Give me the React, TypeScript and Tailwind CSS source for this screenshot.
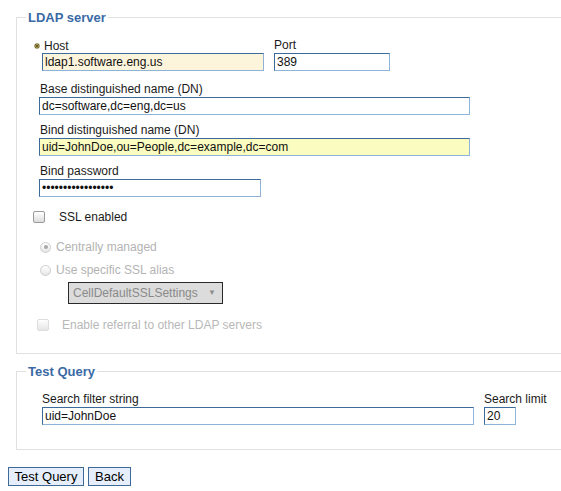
import React from "react";

const inputBase =
    "block h-[18px] border border-t-[#3c6a9a] border-l-[#3c6a9a] border-r-[#8fb3d8] border-b-[#8fb3d8] px-[2px] text-[12px] leading-[16px] text-[#111] outline-none";

function Label({children, className = ""}: {children: React.ReactNode; className?: string}) {
    return <div className={`h-[15px] leading-[14px] text-[12px] text-[#1a1a1a] ${className}`}>{children}</div>;
}

function Checkbox({disabled}: {disabled?: boolean}) {
    return (
        <span
            className={`block w-[12px] h-[12px] rounded-[2px] border bg-gradient-to-b from-white to-[#dcdcdc] ${
                disabled ? "border-[#cfcfcf] opacity-70" : "border-[#9a9a9a]"
            }`}
        />
    );
}

function Radio({checked}: {checked?: boolean}) {
    return (
        <span className="flex items-center justify-center w-[11px] h-[11px] rounded-full border border-[#cdcdcd] bg-gradient-to-b from-white to-[#e6e6e6]">
            {checked && <span className="block w-[4px] h-[4px] rounded-full bg-[#a8a8a8]"/>}
        </span>
    );
}

function RequiredStar() {
    return (
        <svg width="6" height="6" viewBox="0 0 6 6" className="shrink-0">
            <g stroke="#6e5e14" strokeWidth="1.1">
                <line x1="3" y1="0" x2="3" y2="6"/>
                <line x1="0" y1="3" x2="6" y2="3"/>
                <line x1="0.9" y1="0.9" x2="5.1" y2="5.1"/>
                <line x1="5.1" y1="0.9" x2="0.9" y2="5.1"/>
            </g>
        </svg>
    );
}

export default function App() {
    return (
        <div className="w-[561px] h-[491px] overflow-hidden bg-white font-['Liberation_Sans',Arial,sans-serif] text-[12px] text-[#1a1a1a]">
            {/* LDAP server */}
            <fieldset className="mt-[10px] ml-[16px] mr-[-30px] border border-[#e0e0e0] pb-[21px]">
                <legend className="ml-[9px] px-[2px] text-[13px] leading-[15px] font-bold text-[#3a6aa5]">
                    LDAP server
                </legend>

                <div className="pt-[13px] flex gap-[10px] ml-[25px]">
                    <div>
                        <Label className="-ml-[8px] flex items-center">
                            <RequiredStar/>
                            <span className="ml-[4px]">Host</span>
                        </Label>
                        <input readOnly value="ldap1.software.eng.us" className={`${inputBase} w-[222px] bg-[#fdf4dc]`}/>
                    </div>
                    <div>
                        <Label>Port</Label>
                        <input readOnly value="389" className={`${inputBase} w-[116px] bg-white`}/>
                    </div>
                </div>

                <div className="mt-[11px] ml-[22px]">
                    <Label className="pl-[1px]">Base distinguished name (DN)</Label>
                    <input readOnly value="dc=software,dc=eng,dc=us" className={`${inputBase} w-[431px] bg-white`}/>
                </div>

                <div className="mt-[8px] ml-[22px]">
                    <Label className="pl-[1px]">Bind distinguished name (DN)</Label>
                    <input readOnly value="uid=JohnDoe,ou=People,dc=example,dc=com"
                           className={`${inputBase} w-[431px] bg-[#fafcc0]`}/>
                </div>

                <div className="mt-[8px] ml-[22px]">
                    <Label className="pl-[1px]">Bind password</Label>
                    <input readOnly type="password" value="passwordpassword1"
                           className={`${inputBase} w-[222px] bg-white`}/>
                </div>

                <div className="mt-[13px] ml-[16px] flex items-center h-[14px]">
                    <Checkbox/>
                    <span className="ml-[14px] leading-[14px]">SSL enabled</span>
                </div>

                <div className="mt-[16px] ml-[23px] flex items-center h-[14px] text-[#b3b3b3]">
                    <Radio checked/>
                    <span className="ml-[5px] leading-[14px]">Centrally managed</span>
                </div>

                <div className="mt-[9px] ml-[23px] flex items-center h-[14px] text-[#b3b3b3]">
                    <Radio/>
                    <span className="ml-[5px] leading-[14px]">Use specific SSL alias</span>
                </div>

                <div className="mt-[5px] ml-[51px] flex items-center w-[155px] h-[22px] border border-[#2a2a2a] bg-[#dcdcdc] pl-[4px] pr-[6px] text-[#8a8a8a]">
                    <span className="flex-1">CellDefaultSSLSettings</span>
                    <span className="text-[8px] text-[#8f8f8f]">▼</span>
                </div>

                <div className="mt-[14px] ml-[20px] flex items-center h-[14px] text-[#b8b8b8]">
                    <Checkbox disabled/>
                    <span className="ml-[13px] leading-[14px]">Enable referral to other LDAP servers</span>
                </div>
            </fieldset>

            {/* Test Query */}
            <fieldset className="mt-[10px] ml-[16px] mr-[-30px] border border-[#e0e0e0] pb-[24px]">
                <legend className="ml-[9px] px-[2px] text-[13px] leading-[15px] font-bold text-[#3a6aa5]">
                    Test Query
                </legend>
                <div className="pt-[13px] flex gap-[10px] ml-[25px]">
                    <div>
                        <Label>Search filter string</Label>
                        <input readOnly value="uid=JohnDoe" className={`${inputBase} w-[432px] bg-white`}/>
                    </div>
                    <div>
                        <Label>Search limit</Label>
                        <input readOnly value="20" className={`${inputBase} w-[32px] bg-white`}/>
                    </div>
                </div>
            </fieldset>

            <div className="mt-[17px] ml-[8px] flex gap-[4px]">
                <button className="h-[19px] w-[76px] border border-[#3d6a98] bg-[#e6eefb] text-[13px] leading-[17px] text-black">
                    Test Query
                </button>
                <button className="h-[19px] w-[43px] border border-[#3d6a98] bg-[#e6eefb] text-[13px] leading-[17px] text-black">
                    Back
                </button>
            </div>
        </div>
    );
}
